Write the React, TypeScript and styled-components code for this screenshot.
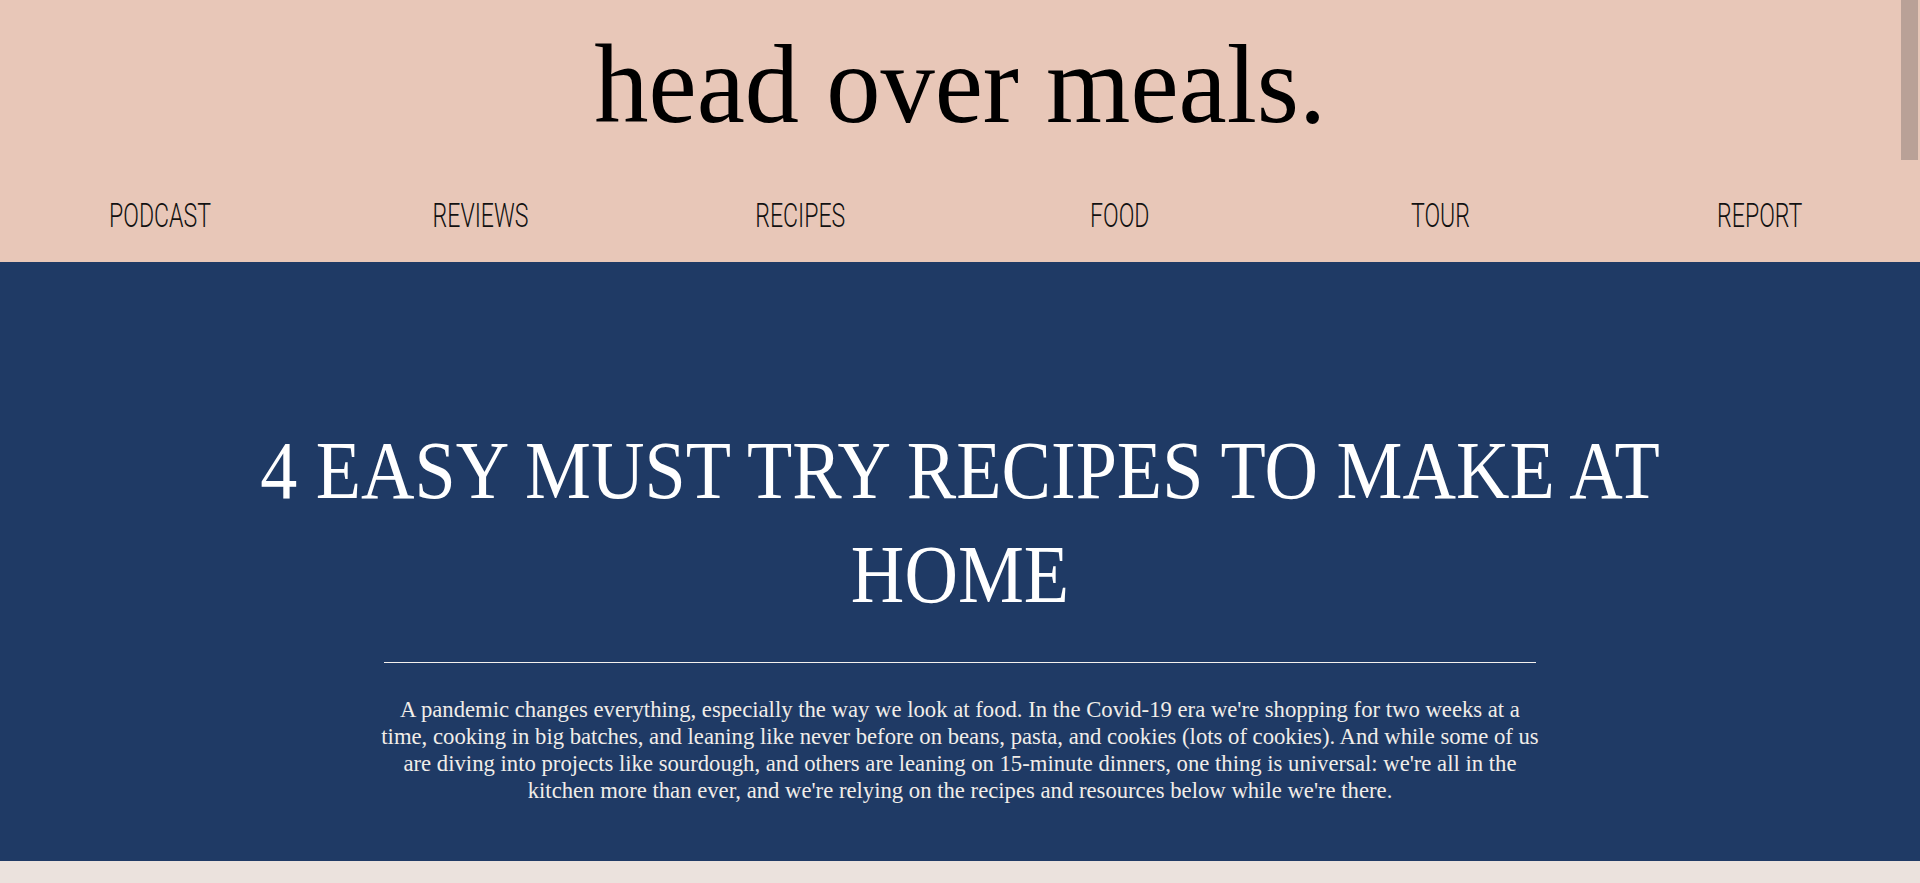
import React from "react";
import styled, { createGlobalStyle } from "styled-components";

const Global = createGlobalStyle`
  html, body {
    margin: 0;
    padding: 0;
    height: 100%;
    overflow: hidden;
    background: #ebe2dd;
  }
  * { box-sizing: border-box; }
`;

const Page = styled.div`
  height: 100vh;
  overflow: hidden;
  display: flex;
  flex-direction: column;
  position: relative;
`;

const Header = styled.header`
  background: #e8c7b8;
  height: 262px;
  padding-top: 27px;
  display: flex;
  flex-direction: column;
  align-items: center;
`;

const Brand = styled.h1`
  margin: 0;
  font-family: "Liberation Serif", "Times New Roman", serif;
  font-weight: 400;
  font-size: 113px;
  line-height: 114px;
  color: #000;
  text-align: center;
  white-space: nowrap;
`;

const Squeeze = styled.span<{ $scale: number }>`
  display: inline-block;
  transform: scaleX(${(p) => p.$scale});
  transform-origin: center;
`;

const Nav = styled.nav`
  margin-top: 57px;
  width: 100%;
  display: grid;
  grid-template-columns: repeat(6, 1fr);
`;

const NavItem = styled.a`
  font-family: Roboto, "Liberation Sans", sans-serif;
  font-weight: 300;
  font-size: 34px;
  line-height: 34px;
  color: #111;
  text-align: center;
  text-decoration: none;
  white-space: nowrap;
`;

const Hero = styled.section`
  background: #1f3a65;
  height: 599px;
  padding-top: 156px;
  display: flex;
  flex-direction: column;
  align-items: center;
`;

const Heading = styled.h2`
  margin: 0;
  width: 1700px;
  font-family: "Liberation Serif", "Times New Roman", serif;
  font-weight: 400;
  font-size: 83px;
  line-height: 104px;
  color: #fff;
  text-align: center;
  transform: scaleX(0.893);
  transform-origin: center;
`;

const Divider = styled.hr`
  margin: 36px 0 0;
  width: 60%;
  border: 0;
  height: 1px;
  background: #f4f1ee;
`;

const Lead = styled.p`
  margin: 33px 0 0;
  width: 1166px;
  font-family: "Liberation Serif", "Times New Roman", serif;
  font-size: 22.7px;
  line-height: 27px;
  color: #f1ede9;
  text-align: center;
`;

const Below = styled.section`
  flex: 1;
  background: #ebe2dd;
`;

const ScrollThumb = styled.div`
  position: absolute;
  top: 0;
  right: 2px;
  width: 17px;
  height: 160px;
  background: #b9a197;
`;

const navItems = ["PODCAST", "REVIEWS", "RECIPES", "FOOD", "TOUR", "REPORT"];

export default function App() {
  return (
    <>
      <Global />
      <Page>
        <Header>
          <Brand>
            <Squeeze $scale={0.96}>head over meals.</Squeeze>
          </Brand>
          <Nav>
            {navItems.map((item) => (
              <NavItem key={item} href="#">
                <Squeeze $scale={0.68}>{item}</Squeeze>
              </NavItem>
            ))}
          </Nav>
        </Header>
        <Hero>
          <Heading>4 EASY MUST TRY RECIPES TO MAKE AT HOME</Heading>
          <Divider />
          <Lead>
            A pandemic changes everything, especially the way we look at food. In the Covid-19 era
            we're shopping for two weeks at a time, cooking in big batches, and leaning like never
            before on beans, pasta, and cookies (lots of cookies). And while some of us are diving
            into projects like sourdough, and others are leaning on 15-minute dinners, one thing is
            universal: we're all in the kitchen more than ever, and we're relying on the recipes and
            resources below while we're there.
          </Lead>
        </Hero>
        <Below />
        <ScrollThumb />
      </Page>
    </>
  );
}
